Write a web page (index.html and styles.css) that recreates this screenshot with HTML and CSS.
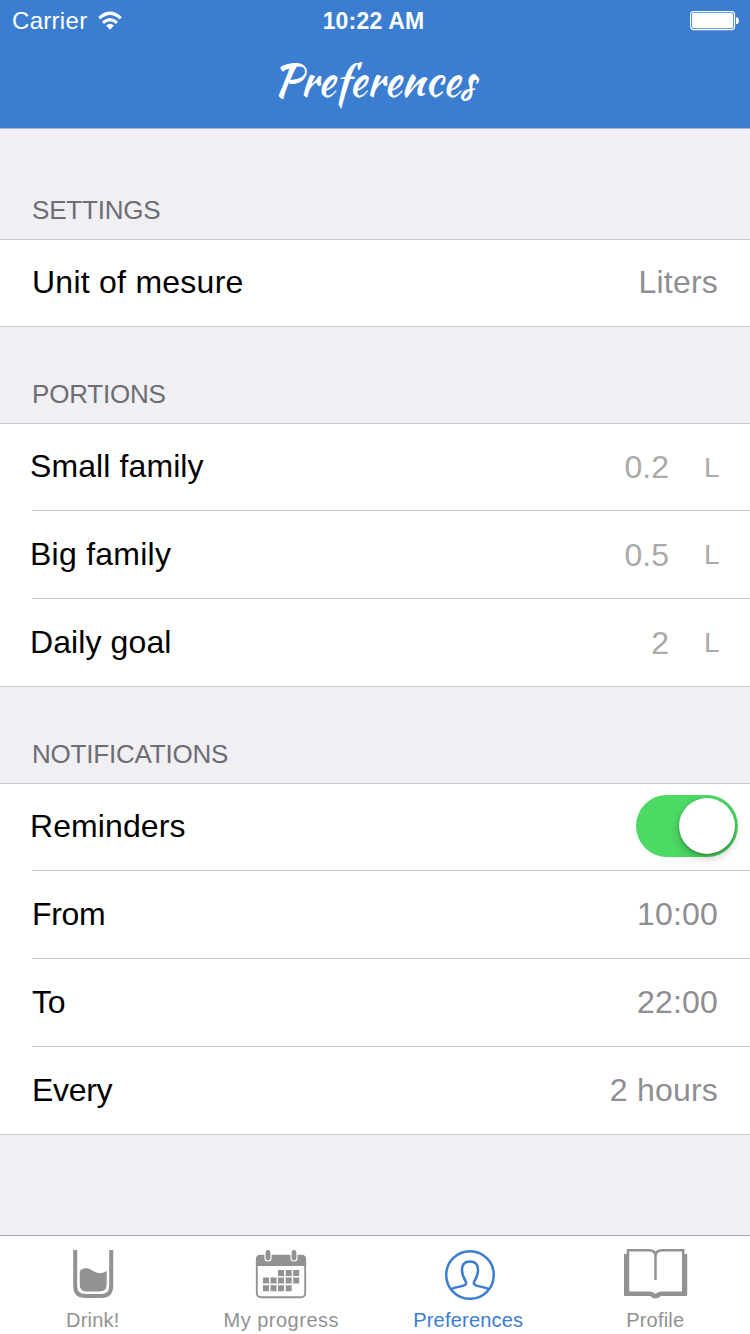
FILE: index.html
```html
<!DOCTYPE html>
<html lang="en">
<head>
<meta charset="utf-8">
<title>Preferences</title>
<link rel="stylesheet" href="styles.css">
</head>
<body>
<div class="app">
  <header class="header">
    <div class="status">
      <div class="status-left">
        <span class="carrier">Carrier</span>
        <svg class="wifi" width="24" height="20" viewBox="0 0 26 20" preserveAspectRatio="none" fill="none" stroke="#fff" stroke-width="3.200">
          <path d="M1.400 7.200Q13 -2.700 24.600 7.200"/>
          <path d="M5.400 11.800Q13 5.400 20.600 11.800"/>
          <path d="M8.800 14.600Q13 11 17.200 14.600L13 18.800Z" fill="#fff" stroke="none"/>
        </svg>
      </div>
      <span class="time">10:22 AM</span>
      <svg class="battery" width="50" height="20" viewBox="0 0 50 20">
        <rect x="0.600" y="0.600" width="44" height="18" rx="3" fill="none" stroke="#fff" stroke-width="1.100"/>
        <rect x="2" y="2" width="41.200" height="15.200" rx="1.800" fill="#fff"/>
        <path d="M46 6.200Q49 6.500 49 9.700T46 13.200Z" fill="#fff"/>
      </svg>
    </div>
    <h1 class="title">Preferences</h1>
  </header>

  <main class="content">
    <h2 class="group-title first">SETTINGS</h2>
    <div class="group">
      <div class="row"><span class="label wide">Unit of mesure</span><span class="value">Liters</span></div>
    </div>

    <h2 class="group-title">PORTIONS</h2>
    <div class="group">
      <div class="row custom"><span class="label">Small family</span><span class="amount">0.2</span><span class="unit">L</span></div>
      <div class="row custom"><span class="label wide">Big family</span><span class="amount">0.5</span><span class="unit">L</span></div>
      <div class="row custom"><span class="label">Daily goal</span><span class="amount">2</span><span class="unit">L</span></div>
    </div>

    <h2 class="group-title">NOTIFICATIONS</h2>
    <div class="group">
      <div class="row custom reminders"><span class="label">Reminders</span><span class="switch"><span class="knob"></span></span></div>
      <div class="row"><span class="label tight">From</span><span class="value">10:00</span></div>
      <div class="row"><span class="label tight">To</span><span class="value">22:00</span></div>
      <div class="row"><span class="label tight">Every</span><span class="value">2 hours</span></div>
    </div>
  </main>

  <nav class="tabs">
    <div class="tab">
      <svg width="64" height="54" viewBox="0 0 64 54" fill="#929292">
        <path d="M13.200 4V40Q13.200 50 23.200 50H39.200Q49.200 50 49.200 40V4" fill="none" stroke="#929292" stroke-width="4"/>
        <path d="M17.200 25C21.700 20.500 25.700 21 30.200 24S40.700 28 45.200 24V38Q45.200 46 37.200 46H25.200Q17.200 46 17.200 38Z" stroke="#fff" stroke-width="1"/>
      </svg>
      <span class="tab-label drink">Drink!</span>
    </div>
    <div class="tab">
      <svg width="64" height="54" viewBox="0 0 64 54" fill="#929292">
        <rect x="7.800" y="9.800" width="48.400" height="41.400" rx="4" fill="none" stroke="#929292" stroke-width="1.900"/>
        <path d="M7 20V13Q7 9 11 9H53Q57 9 57 13V20Z"/>
        <rect x="16" y="3.500" width="6" height="11.500" rx="3" stroke="#fff" stroke-width="1.200"/>
        <rect x="42" y="3.500" width="6" height="11.500" rx="3" stroke="#fff" stroke-width="1.200"/>
        <path d="M29 24h6v6h-6zM36.700 24h6v6h-6zM44.200 24h6v6h-6zM14 31.600h6v6h-6zM21.500 31.600h6v6h-6zM29 31.600h6v6h-6zM36.700 31.600h6v6h-6zM44.200 31.600h6v6h-6zM14 39.200h6v6h-6zM21.500 39.200h6v6h-6zM29 39.200h6v6h-6zM36.700 39.200h6v6h-6z"/>
      </svg>
      <span class="tab-label">My progress</span>
    </div>
    <div class="tab active">
      <svg width="64" height="54" viewBox="0 0 64 54" fill="none" stroke="#3a7dd1" stroke-width="2.500">
        <circle cx="33" cy="29" r="23.800"/>
        <path d="M14.500 43C18 41 25 40.800 28 39Q30 37.500 28.500 35C26 31 25 28 25 24C25 18.500 28 15.500 33 15.500S41 18.500 41 24C41 28 40 31 37.500 35Q36 37.500 38 39C41 40.800 48 41 51.500 43"/>
      </svg>
      <span class="tab-label prefs">Preferences</span>
    </div>
    <div class="tab">
      <svg width="64" height="54" viewBox="0 0 64 54" fill="none" stroke="#929292">
        <path d="M2 8V49M61.200 8V49" stroke-width="4"/>
        <path d="M0 45.500H26Q29 45.500 31.500 48Q34 45.500 37 45.500H63V50H37Q34 52.500 31.500 52.500Q29 52.500 26 50H0Z" fill="#929292" stroke="none"/>
        <path d="M4 46V4.200H25Q31.500 4.200 31.500 10V34M31.500 10Q31.500 4.200 38 4.200H59.200V46" stroke-width="2.500"/>
      </svg>
      <span class="tab-label profile">Profile</span>
    </div>
  </nav>
</div>
</body>
</html>
```

FILE: styles.css
```css
* { box-sizing: border-box; }
body {
  margin: 0;
  font-family: "Liberation Sans", Arial, sans-serif;
  background: #efeff4;
}
.app {
  display: flex;
  flex-direction: column;
  width: 750px;
  height: 1334px;
  overflow: hidden;
}
.header {
  height: 129px;
  background: #3a7dd1;
  border-bottom: 1px solid #a9b6cf;
  color: #fff;
}
.status {
  display: grid;
  grid-template-columns: 1fr auto 1fr;
  align-items: center;
  height: 40px;
  padding: 0 10px 0 12px;
}
.status-left { display: flex; align-items: center; gap: 11px; }
.carrier { font-size: 24px; line-height: 40px; letter-spacing: 0.3px; padding-top: 1px; }
.time { font-size: 23px; font-weight: bold; line-height: 40px; letter-spacing: 0.2px; padding: 1px 5px 0 0; }
.battery { justify-self: end; margin-top: 1px; }
.title {
  margin: 0;
  height: 88px;
  text-align: center;
  font-family: "Kaushan Script", cursive;
  font-size: 43px;
  font-weight: 400;
  line-height: 81px;
  padding-right: 2px;
}
.content { flex: 1; }
.group-title {
  margin: 0;
  height: 96px;
  padding: 52px 32px 0;
  font-size: 26px;
  font-weight: normal;
  line-height: 30px;
  letter-spacing: -0.2px;
  color: #6d6d72;
}
.group-title.first { height: 110px; padding-top: 66px; }
.group {
  background: #fff;
  border-top: 1px solid #c8c7cc;
  border-bottom: 1px solid #c8c7cc;
}
.row {
  display: flex;
  align-items: center;
  height: 88px;
  margin-left: 32px;
  padding-right: 32px;
  padding-bottom: 2px;
  border-top: 1px solid #c8c7cc;
  font-size: 32px;
  line-height: 36px;
}
.row:first-child { height: 86px; border-top: 0; }
.label { flex: 1; letter-spacing: 0.1px; }
.wide { letter-spacing: 0.250px; }
.tight { letter-spacing: -0.3px; }
.custom .label { margin-left: -2px; }
.value { color: #8e8e93; letter-spacing: 0.2px; }
.amount { color: #aaa; padding-top: 2px; }
.unit { width: 49px; padding-left: 35px; padding-top: 3px; font-size: 28px; color: #aaa; }
.reminders { padding-right: 12px; }
.switch {
  display: flex;
  justify-content: flex-end;
  width: 102px;
  height: 62px;
  padding: 3px;
  border-radius: 31px;
  background: #4cd964;
}
.knob {
  width: 56px;
  height: 56px;
  border-radius: 50%;
  background: #fff;
  box-shadow: 0 5px 10px rgba(0, 0, 0, 0.2), 0 1px 3px rgba(0, 0, 0, 0.3);
}
.tabs {
  display: grid;
  grid-template-columns: repeat(4, 1fr);
  height: 99px;
  background: #fff;
  border-top: 1px solid #a3a3ab;
}
.tab {
  display: flex;
  flex-direction: column;
  align-items: center;
  padding-top: 10px;
  color: #929292;
}
.tab svg { display: block; }
.tab-label { margin-top: 8px; font-size: 20px; line-height: 24px; letter-spacing: 0.5px; }
.active { color: #3a7dd1; }
.prefs { letter-spacing: 0.2px; padding-right: 1px; }
.drink, .profile { letter-spacing: 0.2px; padding-right: 2px; }
```
